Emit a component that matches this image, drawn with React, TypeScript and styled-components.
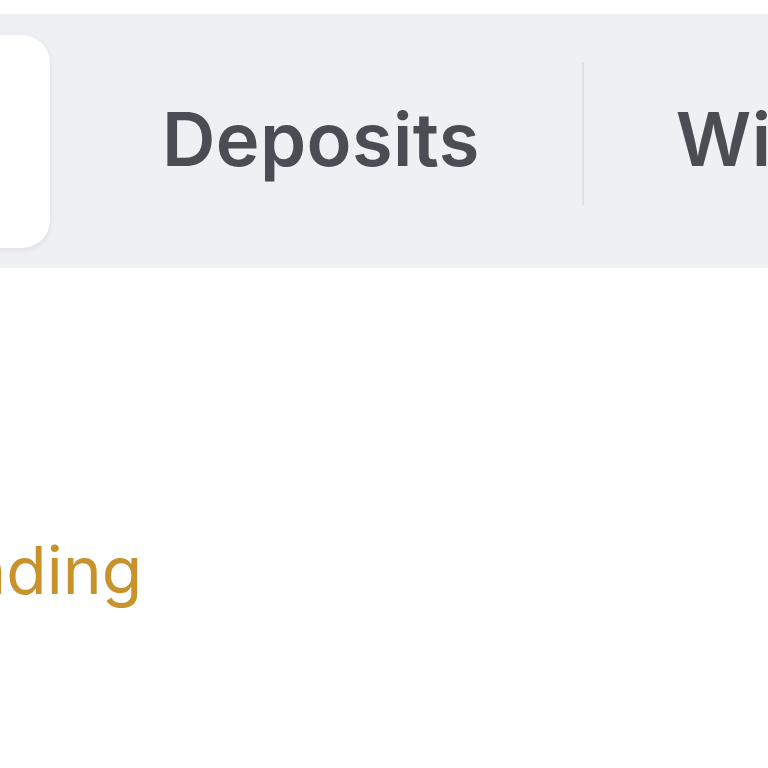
import React from 'react';
import styled, { createGlobalStyle } from 'styled-components';

const GlobalStyle = createGlobalStyle`
	html, body {
		margin: 0;
		padding: 0;
		background: #ffffff;
		overflow: hidden;
	}
	body {
		font-family: Inter, 'Noto Sans', 'Liberation Sans', sans-serif;
	}
`;

const Page = styled.div`
	width: 768px;
	height: 768px;
	padding-top: 14px;
	box-sizing: border-box;
	overflow: hidden;
`;

const TabBar = styled.nav`
	display: flex;
	flex-direction: row;
	align-items: stretch;
	width: max-content;
	height: 254px;
	margin-left: -520px;
	padding: 21px 21px 20px 21px;
	box-sizing: border-box;
	background: #eff0f4;
`;

const Tab = styled.button<{ $active?: boolean }>`
	position: relative;
	display: flex;
	align-items: center;
	justify-content: center;
	margin: 0;
	padding: 0 104px 5px 104px;
	border: 0;
	border-radius: 28px;
	background: ${({ $active }) => ($active ? '#ffffff' : 'transparent')};
	box-shadow: ${({ $active }) =>
		$active ? '0 2px 6px rgba(20, 24, 40, 0.08)' : 'none'};
	font-family: inherit;
	font-size: 74px;
	font-weight: 600;
	letter-spacing: 0.4px;
	color: #4b4d55;
	cursor: pointer;
	&:first-child {
		width: 549px;
		margin-right: 8px;
	}
	&:last-child {
		padding-left: 92px;
	}
	&:not(:first-child):not(:last-child):after {
		position: absolute;
		right: 0;
		top: 27px;
		content: '';
		width: 2px;
		height: 143px;
		background: #dfe0e5;
	}
`;

const Content = styled.section`
	margin-top: 263px;
	margin-left: -113px;
`;

const Status = styled.span<{ $tone: string }>`
	display: block;
	font-size: 66px;
	line-height: 1.2;
	font-weight: 400;
	color: ${({ $tone }) => $tone};
`;

const App: React.FC = () => {
	return (
		<Page>
			<GlobalStyle />
			<TabBar>
				<Tab $active>All</Tab>
				<Tab>Deposits</Tab>
				<Tab>Withdrawals</Tab>
			</TabBar>
			<Content>
				<Status $tone="#c8922c">Pending</Status>
			</Content>
		</Page>
	);
};

export default App;
